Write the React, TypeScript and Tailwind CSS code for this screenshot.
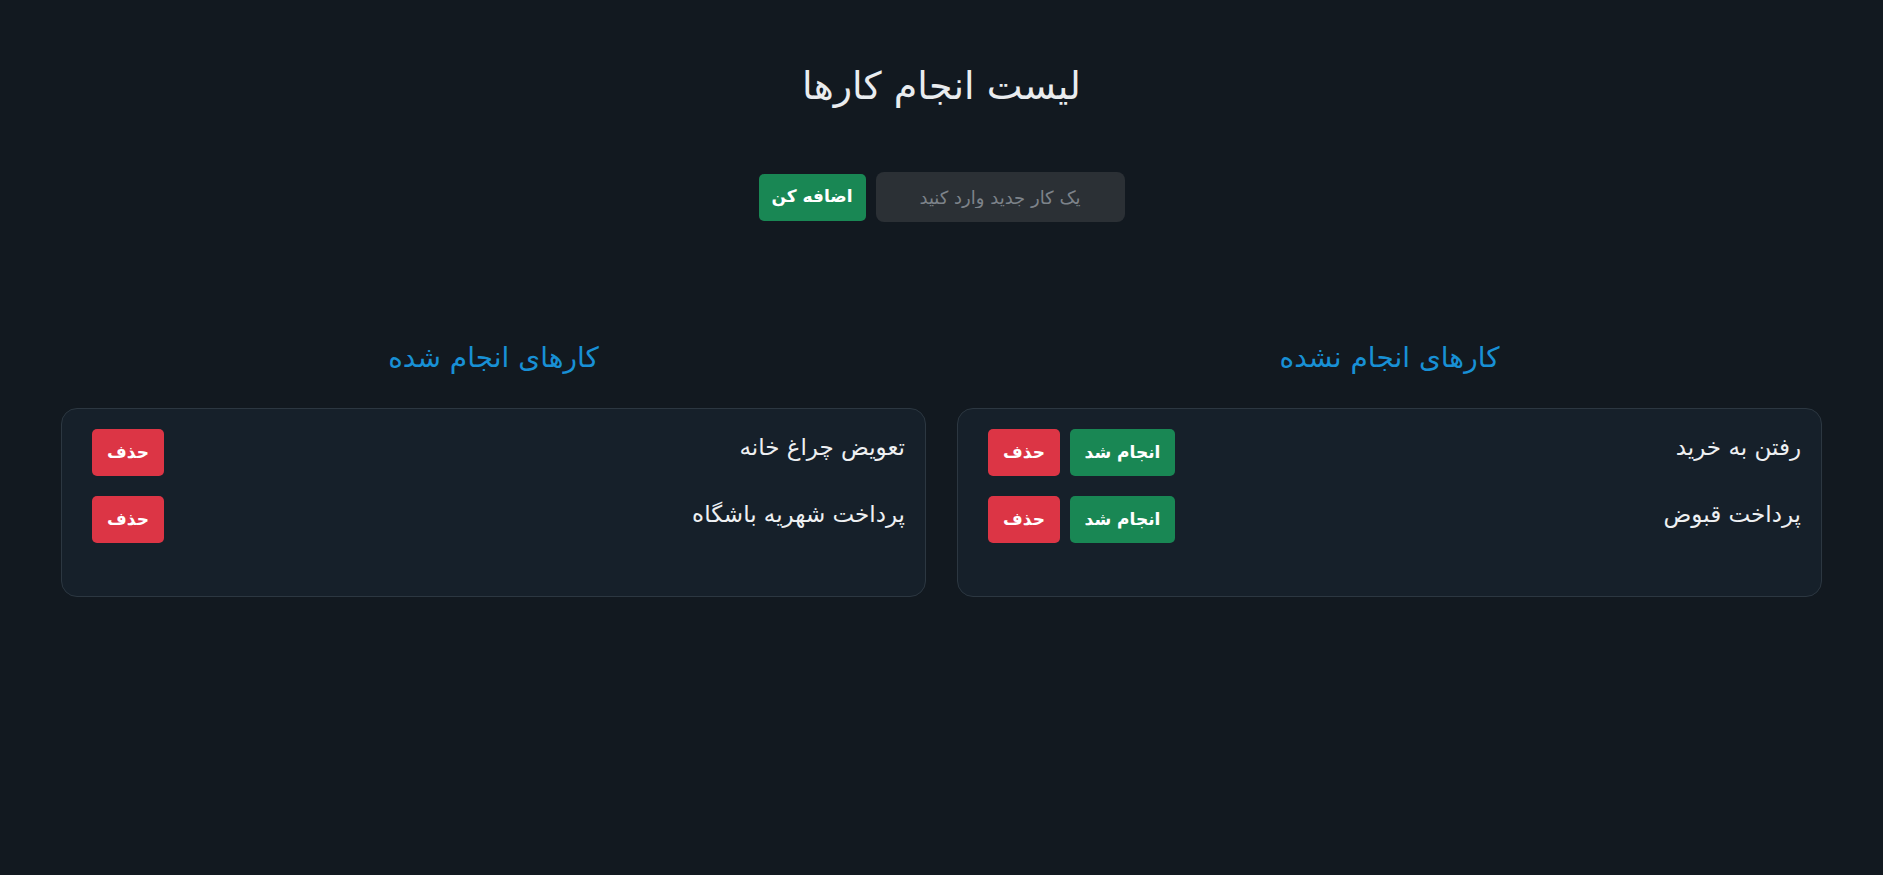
const todo = ["رفتن به خرید", "پرداخت قبوض"];
const done = ["تعویض چراغ خانه", "پرداخت شهریه باشگاه"];

export default function App() {
  return (
    <div
      dir="rtl"
      className="min-h-[875px] bg-[#121920] text-[#e9ecef]"
      style={{ fontFamily: '"DejaVu Sans", "Noto Sans", sans-serif' }}
    >
      <h1 className="pt-[64px] text-center text-[38px] leading-[44px]">لیست انجام کارها</h1>

      {/* Add form */}
      <div className="mt-[64px] flex items-center justify-center gap-[10px]">
        <input
          placeholder="یک کار جدید وارد کنید"
          className="h-[50px] w-[249px] rounded-lg bg-[#2b3035] px-3 text-center text-[18px] text-[#dee2e6] outline-none placeholder:text-[#7d838a]"
        />
        <button className="h-[47px] w-[107px] rounded-[5px] bg-[#198754] text-[17px] font-bold text-white">
          اضافه کن
        </button>
      </div>

      {/* Columns */}
      <div className="mt-[118px] grid grid-cols-2 gap-[31px] px-[61px]">
        <Column title="کارهای انجام نشده" items={todo} showDone />
        <Column title="کارهای انجام شده" items={done} />
      </div>
    </div>
  );
}

function Column({ title, items, showDone }: { title: string; items: string[]; showDone?: boolean }) {
  return (
    <div>
      <h3 className="text-center text-[28px] leading-[36px] text-[#1890d5]">{title}</h3>
      <div className="mt-[32px] h-[189px] rounded-2xl border border-[#2c3741] bg-[#16202a] pt-[20px] pr-[20px] pl-[30px]">
        <ul className="flex flex-col gap-[20px]">
          {items.map((item) => (
            <li key={item} className="flex items-start justify-between">
              <span className="text-[23px] leading-[36px] text-[#eef0f2]">{item}</span>
              <div className="flex gap-[10px]">
                {showDone && (
                  <button className="h-[47px] w-[105px] rounded-[5px] bg-[#198754] text-[17px] font-bold text-white">
                    انجام شد
                  </button>
                )}
                <button className="h-[47px] w-[72px] rounded-[5px] bg-[#dc3545] text-[17px] font-bold text-white">
                  حذف
                </button>
              </div>
            </li>
          ))}
        </ul>
      </div>
    </div>
  );
}
